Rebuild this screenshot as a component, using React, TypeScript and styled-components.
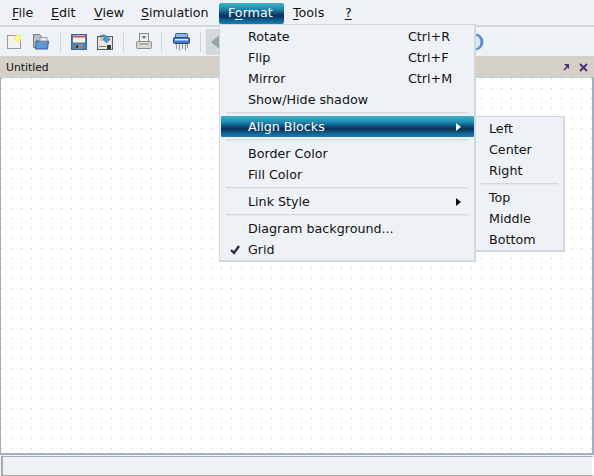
import React from "react";
import styled, { createGlobalStyle } from "styled-components";

const Global = createGlobalStyle`
  html, body { margin: 0; padding: 0; background: #eef1f6; }
  body { font-family: "DejaVu Sans", sans-serif; font-size: 12.7px; color: #111; }
`;
const bar = "linear-gradient(#3cb4cb 0%, #1f86ad 30%, #0d4c78 50%, #0a3058 62%, #0f5d8e 80%, #1b7fb5 100%)";
const Win = styled.div`
  position: relative; width: 594px; height: 476px; overflow: hidden;
  display: flex; flex-direction: column; background: #eef1f6;
`;
const MenuBar = styled.div`
  box-sizing: border-box; padding: 3px 0 0 3px; display: flex;
  border-bottom: 2px solid #cfd9dd; height: 27px; background: #eef1f6;
`;
const Top = styled.div<{ $active?: boolean; $w: number }>`
  width: ${p => p.$w}px; box-sizing: border-box;
  height: 21px; line-height: 20px; padding-left: 9px; border-radius: 2px;
  color: ${p => (p.$active ? "#fff" : "#111")};
  background: ${p => (p.$active ? bar : "none")};
`;
const Tool = styled.div`
  height: 29px; box-sizing: border-box; padding: 0 0 0 7px; display: flex; align-items: center;
  background: #eef1f6;
`;
const Sep = styled.div<{ $l: number; $r: number }>`
  width: 1px; height: 20px; background: #cdd3d6; margin: 0 ${p => p.$r}px 0 ${p => p.$l}px;
`;
const IconSlot = styled.div<{ $l?: number }>`
  margin-left: ${p => p.$l ?? 0}px; height: 18px; display: flex; align-items: center;
`;
const Pressed = styled.div`
  width: 13px; height: 26px; margin-left: 5px; background: #d1d9dc; display: flex; align-items: center; justify-content: flex-end;
`;
const Circle = styled.div`position: absolute; left: 466px; top: 33px; width: 18px; height: 18px;`;
const Title = styled.div`
  height: 21px; background: #d4d0c8; display: flex; align-items: center; justify-content: space-between;
  padding: 1px 6px 0 6px; box-sizing: border-box; font-size: 10.8px; color: #111;
`;
const TitleIcons = styled.div`display: flex; gap: 9px; align-items: center;`;
const Canvas = styled.div`
  flex: 1; box-sizing: border-box; border: solid #9db3c2; border-width: 1px 2px 2px 1px;
  border-top-color: #c5d0d6;
  background-color: #fff;
  background-image: conic-gradient(from 270deg at 1px 1px, #bdbdbd 25%, transparent 0);
  background-size: 10px 10px; background-position: 10px 0;
`;
const Status = styled.div`
  height: 20px; box-sizing: border-box; margin: 1px 0 0 1px; background: #eef1f6;
  border: solid #a9a9a9; border-width: 1px 2px 1px 2px; border-right-color: #fff;
`;
const Menu = styled.div<{ $x: number; $y: number; $w: number }>`
  position: absolute; left: ${p => p.$x}px; top: ${p => p.$y}px; width: ${p => p.$w}px; box-sizing: border-box;
  background: #eef1f6; border: 1px solid #cfd9dd; border-right-width: 2px; border-bottom-width: 2px;
  padding: 1px 0 0;
`;
const Item = styled.div<{ $active?: boolean; $pad: number }>`
  position: relative; height: 21px; line-height: 21px; padding-left: ${p => p.$pad}px; display: flex;
  color: ${p => (p.$active ? "#fff" : "#111")};
  background: ${p => (p.$active ? bar : "none")};
  margin: 0 0 0 1px; border-radius: 1px;
`;
const Short = styled.span`position: absolute; left: 187px; top: 0;`;
const Arrow = styled.span<{ $light?: boolean }>`
  position: absolute; right: 13px; top: 7px; width: 0; height: 0;
  border-left: 5px solid ${p => (p.$light ? "#fff" : "#111")};
  border-top: 4px solid transparent; border-bottom: 4px solid transparent;
`;
const Check = styled.svg`position: absolute; left: 9px; top: 6px;`;
const Div = styled.div<{ $m: number }>`
  height: 2px; margin: 2px ${p => p.$m}px 2px;
  background: linear-gradient(#d2dadd 50%, #e4e9ec 50%);
`;
const U = styled.span`text-decoration: underline; text-underline-offset: 2px;`;

const Doc = () => <svg width="14" height="16"><rect x=".5" y="1.500" width="13" height="13" fill="#f1f1ee" stroke="#9a9a96" /><circle cx="11" cy="4" r="3.500" fill="#f6f060" /><circle cx="11" cy="4" r="1.600" fill="#fffbc0" /></svg>;
const Open = () => <svg width="16" height="16"><path d="M.5 .5h6l2 2v11H.5z" fill="#b9bec3" stroke="#707a86" /><path d="M3 7h12.500l-1 8H2.500z" fill="#5f97d2" stroke="#2f5f95" /><rect x="7" y="3.500" width="7" height="3.500" fill="#e8eaec" stroke="#9aa0a6" /></svg>;
const Save = () => <svg width="16" height="16"><rect x=".5" y=".5" width="15" height="15" fill="#4f7db8" stroke="#3a64a0" /><rect x="2" y="1.500" width="12" height="7" fill="#f4f1ea" /><rect x="2" y="2" width="12" height="1.500" fill="#d94a3a" /><rect x="4" y="10" width="8" height="5" fill="#8a8a86" /><rect x="5" y="11" width="2" height="3" fill="#333" /></svg>;
const SaveAs = () => <svg width="16" height="16"><rect x=".5" y="2.500" width="15" height="13" fill="#e8e6df" stroke="#5a5a58" /><rect x="3" y="3" width="10" height="4" fill="#c6c3ba" /><rect x="10" y="11" width="4" height="4" fill="#333" /><rect x="2" y="12" width="7" height="1" fill="#777" /><path d="M3 2c4-2 7-1 8 3l2 0-3.500 4L6 5l2 0C7.500 3 6 2 3 2z" fill="#4a9fd8" stroke="#2a6a9c" strokeWidth=".6" /></svg>;
const Print = () => <svg width="16" height="17"><rect x="3.500" y=".5" width="9" height="9" fill="#f0f0ee" stroke="#8c8c8c" /><path d="M6 4h4M8 2.500v3" stroke="#555" /><rect x=".5" y="8.500" width="15" height="7" rx="1" fill="#d8d8d5" stroke="#8c8c8c" /><rect x="3" y="10.500" width="10" height="1" fill="#8a8a8a" /></svg>;
const Shred = () => <svg width="17" height="18"><rect x="2.500" y=".5" width="12" height="5" rx="1" fill="#8fb6dc" stroke="#2f5f9a" /><rect x=".5" y="4.500" width="16" height="6" rx="1" fill="#3f78c0" stroke="#234f8c" /><rect x="2" y="6" width="13" height="1.500" fill="#dce8f4" /><path d="M3.500 11v5M6.500 11v6.500M9.500 11v5M12.500 11v6.500M14.500 11v4" stroke="#9a9a9a" strokeWidth="1.200" /></svg>;

export default function App() {
  return (
    <Win>
      <Global />
      <MenuBar>
        <Top $w={39}><U>F</U>ile</Top>
        <Top $w={43}><U>E</U>dit</Top>
        <Top $w={47}><U>V</U>iew</Top>
        <Top $w={87}><U>S</U>imulation</Top>
        <Top $w={65} $active>F<U>o</U>rmat</Top>
        <Top $w={52}><U>T</U>ools</Top>
        <Top $w={30}><U>?</U></Top>
      </MenuBar>
      <Tool>
        <IconSlot><Doc /></IconSlot>
        <IconSlot $l={12}><Open /></IconSlot>
        <Sep $l={11} $r={10} />
        <IconSlot><Save /></IconSlot>
        <IconSlot $l={10}><SaveAs /></IconSlot>
        <Sep $l={10} $r={12} />
        <IconSlot><Print /></IconSlot>
        <Sep $l={9} $r={11} />
        <IconSlot><Shred /></IconSlot>
        <Sep $l={10} $r={0} />
        <Pressed>
          <svg width="9" height="14"><path d="M1 7l8-6.500v13z" fill="#9aa4a8" /></svg>
        </Pressed>
      </Tool>
      <Title>
        <span>Untitled</span>
        <TitleIcons>
          <svg width="7" height="8"><path d="M1 1h5v5L4.500 4.500 1.500 7.500.5 6.500 3.500 3.500z" fill="#4a2a78" /></svg>
          <svg width="9" height="9"><path d="M1 1l7 7M8 1l-7 7" stroke="#4a2a78" strokeWidth="1.800" /></svg>
        </TitleIcons>
      </Title>
      <Canvas />
      <Status />
      <Circle>
        <svg width="18" height="18"><circle cx="9" cy="9" r="8.500" fill="#5b8fc4" /><circle cx="7.500" cy="9" r="7" fill="#dbe6f2" /></svg>
      </Circle>
      <Menu $x={219} $y={24} $w={257}>
        <Item $pad={27}>Rotate<Short>Ctrl+R</Short></Item>
        <Item $pad={27}>Flip<Short>Ctrl+F</Short></Item>
        <Item $pad={27}>Mirror<Short>Ctrl+M</Short></Item>
        <Item $pad={27}>Show/Hide shadow</Item>
        <Div $m={6} />
        <Item $active $pad={27}>Align Blocks<Arrow $light /></Item>
        <Div $m={6} />
        <Item $pad={27}>Border Color</Item>
        <Item $pad={27}>Fill Color</Item>
        <Div $m={6} />
        <Item $pad={27}>Link Style<Arrow /></Item>
        <Div $m={6} />
        <Item $pad={27}>Diagram background...</Item>
        <Item $pad={27}>
          <Check width="10" height="10"><path d="M1 5l3 3 5-7" stroke="#24313f" strokeWidth="2.400" fill="none" /></Check>
          Grid
        </Item>
      </Menu>
      <Menu $x={475} $y={116} $w={90}>
        <Item $pad={12}>Left</Item>
        <Item $pad={12}>Center</Item>
        <Item $pad={12}>Right</Item>
        <Div $m={5} />
        <Item $pad={12}>Top</Item>
        <Item $pad={12}>Middle</Item>
        <Item $pad={12}>Bottom</Item>
      </Menu>
    </Win>
  );
}
